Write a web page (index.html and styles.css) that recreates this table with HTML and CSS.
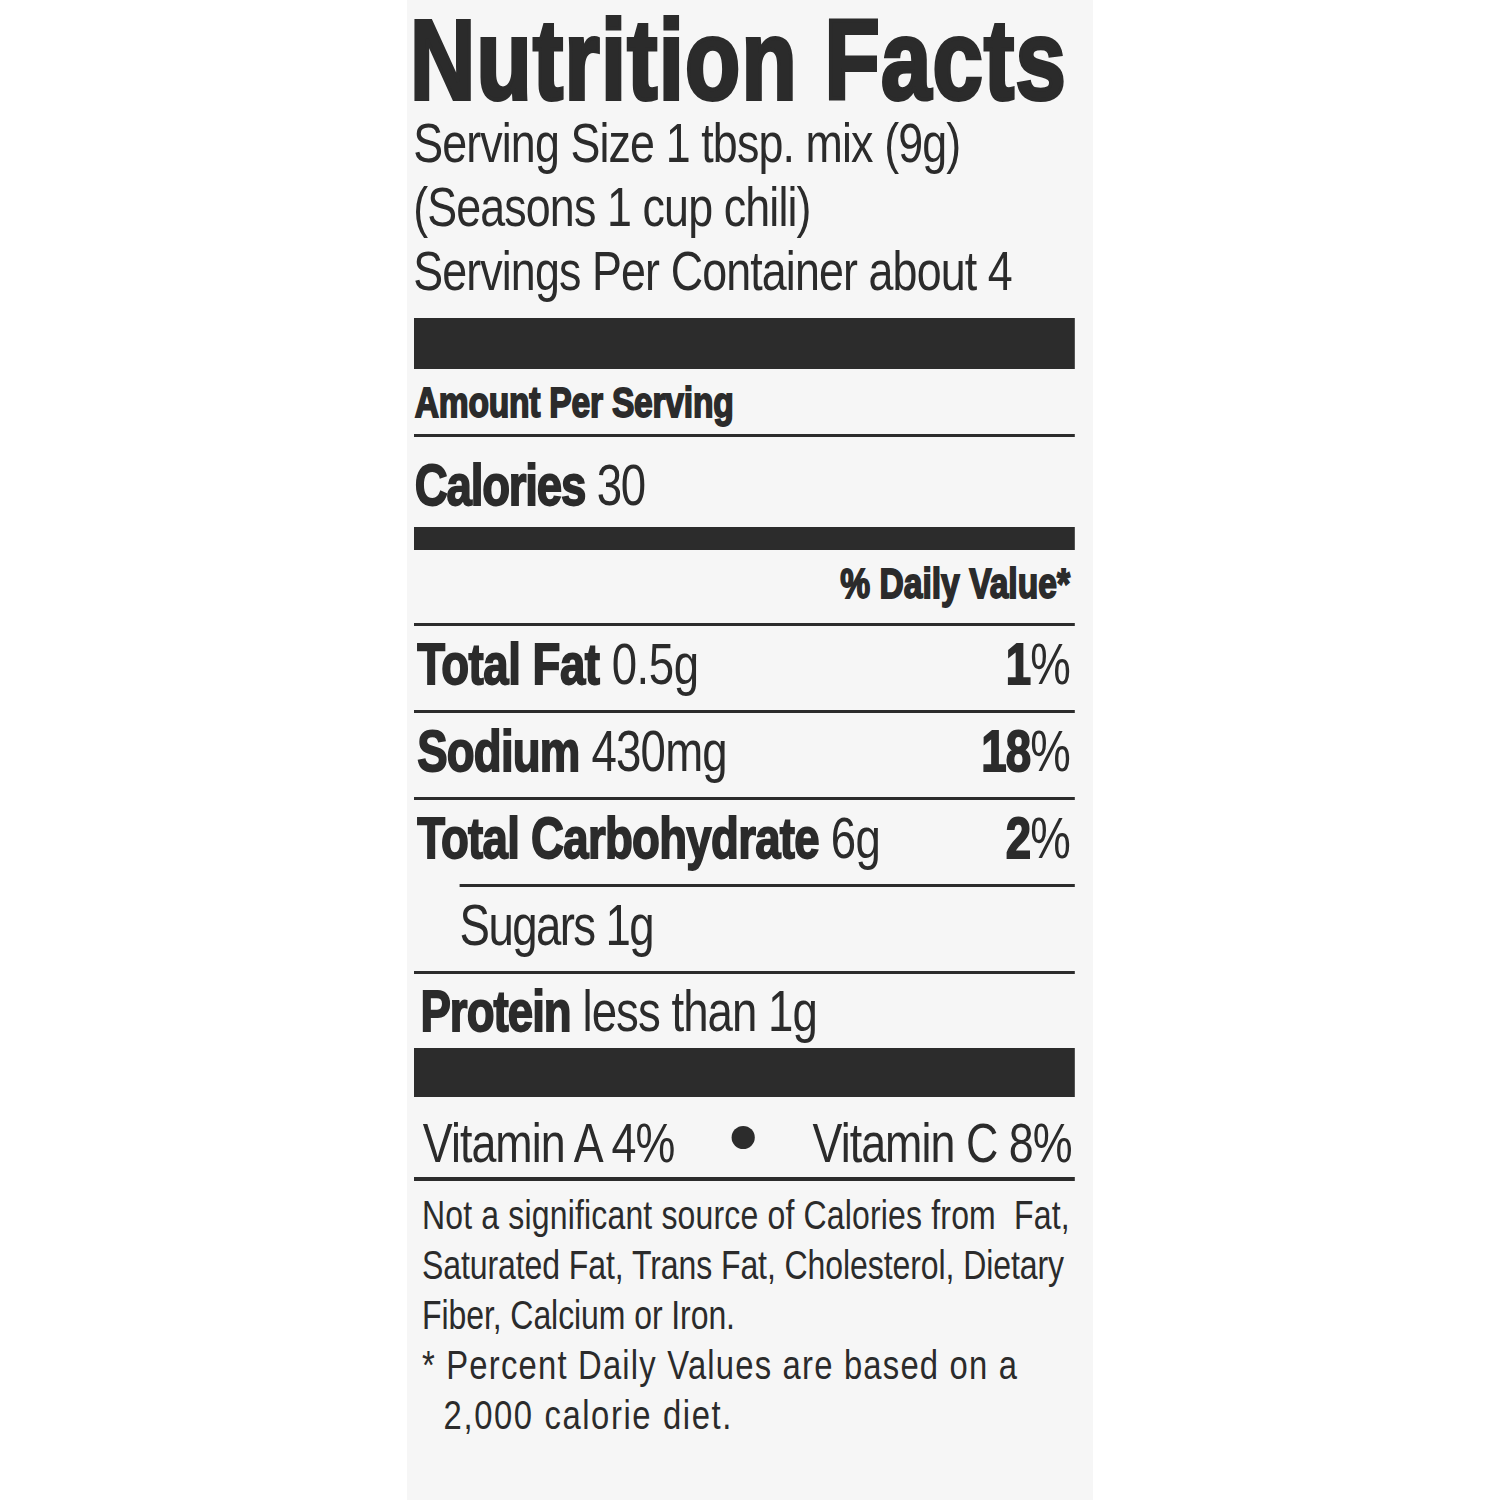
FILE: index.html
```html
<!DOCTYPE html>
<html lang="en">
<head>
<meta charset="utf-8">
<title>Nutrition Facts</title>
<link rel="stylesheet" href="styles.css">
</head>
<body>
<div class="panel">
  <section class="label">
    <h1 class="title">Nutrition Facts</h1>
    <div class="serving">
      <div class="line">Serving Size 1 tbsp. mix (9g)</div>
      <div class="line">(Seasons 1 cup chili)</div>
      <div class="line">Servings Per Container about 4</div>
    </div>
    <div class="bar bar-thick"></div>
    <div class="amount">Amount Per Serving</div>
    <div class="calories"><b>Calories</b> 30</div>
    <div class="bar bar-medium"></div>
    <div class="dv-head">% Daily Value*</div>
    <div class="row"><span><b>Total Fat</b> 0.5g</span><span class="pct"><b>1</b>%</span></div>
    <div class="row row-sodium"><span><b>Sodium</b> 430mg</span><span class="pct"><b>18</b>%</span></div>
    <div class="row row-carb"><span><b>Total Carbohydrate</b> 6g</span><span class="pct"><b>2</b>%</span></div>
    <div class="row row-sub"><span>Sugars 1g</span></div>
    <div class="row row-last"><span><b>Protein</b> less than 1g</span></div>
    <div class="bar bar-low"></div>
    <div class="vitamins">
      <span>Vitamin A 4%</span>
      <span class="dot"></span>
      <span>Vitamin C 8%</span>
    </div>
    <div class="notes">
      <div class="line line-first">Not a significant source of Calories from&nbsp; Fat,</div>
      <div class="line">Saturated Fat, Trans Fat, Cholesterol, Dietary</div>
      <div class="line">Fiber, Calcium or Iron.</div>
      <div class="hang">
        <div class="line">* Percent Daily Values are based on a</div>
        <div class="line">2,000 calorie diet.</div>
      </div>
    </div>
  </section>
</div>
</body>
</html>
```

FILE: styles.css
```css
html, body {
  margin: 0;
  padding: 0;
  background: #ffffff;
}

body {
  font-family: "Liberation Sans", Arial, sans-serif;
  color: #2b2b2b;
}

.panel {
  width: 686px;
  min-height: 1500px;
  margin: 0 auto;
  background: #f6f6f6;
  padding: 0 18px 0 7px;
  box-sizing: border-box;
}

/* condensed type: the whole label is drawn 80% wide */
.label {
  width: 826px;
  transform: scaleX(0.8);
  transform-origin: 0 0;
}

.title {
  margin: 0 0 0 -5px;
  padding-top: 10px;
  font-size: 113px;
  line-height: 100px;
  font-weight: 700;
  letter-spacing: 1.6px;
  -webkit-text-stroke: 4px #2b2b2b;
  white-space: nowrap;
}

.serving {
  margin-left: -1px;
  padding-top: 1px;
}

.serving .line {
  font-size: 56px;
  line-height: 64px;
  letter-spacing: -1.1px;
  white-space: nowrap;
}

.bar {
  background: #2c2c2c;
}

.bar-thick {
  height: 51px;
  margin-top: 15px;
}

.bar-low {
  height: 49px;
}

.bar-medium {
  height: 23px;
}

b {
  font-weight: 700;
  -webkit-text-stroke: 1.8px #2b2b2b;
}

.amount {
  font-size: 42px;
  font-weight: 700;
  line-height: 62px;
  padding: 3px 0 0 1px;
  letter-spacing: -0.3px;
  -webkit-text-stroke: 1.8px #2b2b2b;
  border-bottom: 3px solid #2c2c2c;
}

.calories {
  font-size: 57px;
  line-height: 64px;
  padding: 16px 0 10px 1px;
  letter-spacing: -1.5px;
}

.dv-head {
  font-size: 42px;
  font-weight: 700;
  line-height: 62px;
  padding: 3px 6px 8px 0;
  text-align: right;
  letter-spacing: 0;
  -webkit-text-stroke: 1.8px #2b2b2b;
}

.row {
  display: flex;
  justify-content: space-between;
  border-top: 3px solid #2c2c2c;
  font-size: 57px;
  line-height: 76px;
  padding: 0 6px 8px 4px;
  letter-spacing: -0.6px;
  white-space: nowrap;
}

.row-sodium {
  letter-spacing: -1px;
}

.row-carb {
  letter-spacing: -0.9px;
}

.pct {
  letter-spacing: -1px;
}

.row-sub {
  margin-left: 57px;
  padding-left: 0;
  letter-spacing: -2px;
}

.row-last {
  line-height: 74px;
  padding-bottom: 0;
  padding-left: 8px;
  letter-spacing: -1.2px;
}

.vitamins {
  display: flex;
  justify-content: space-between;
  align-items: center;
  font-size: 56px;
  line-height: 68px;
  padding: 12px 4px 0 11px;
  letter-spacing: -1.2px;
  border-bottom: 4px solid #2c2c2c;
  white-space: nowrap;
}

.dot {
  width: 29px;
  height: 23px;
  border-radius: 50%;
  background: #2c2c2c;
  margin-top: -12px;
}

.notes {
  padding: 9px 0 0 10px;
  font-size: 40px;
  line-height: 50px;
  letter-spacing: -0.1px;
  white-space: nowrap;
}

.line-first {
  letter-spacing: 0.2px;
}

.hang {
  padding-left: 27px;
  font-size: 41px;
  letter-spacing: 1.5px;
}

.hang .line:first-child {
  text-indent: -27px;
}

.hang .line:last-child {
  letter-spacing: 2px;
}
```
